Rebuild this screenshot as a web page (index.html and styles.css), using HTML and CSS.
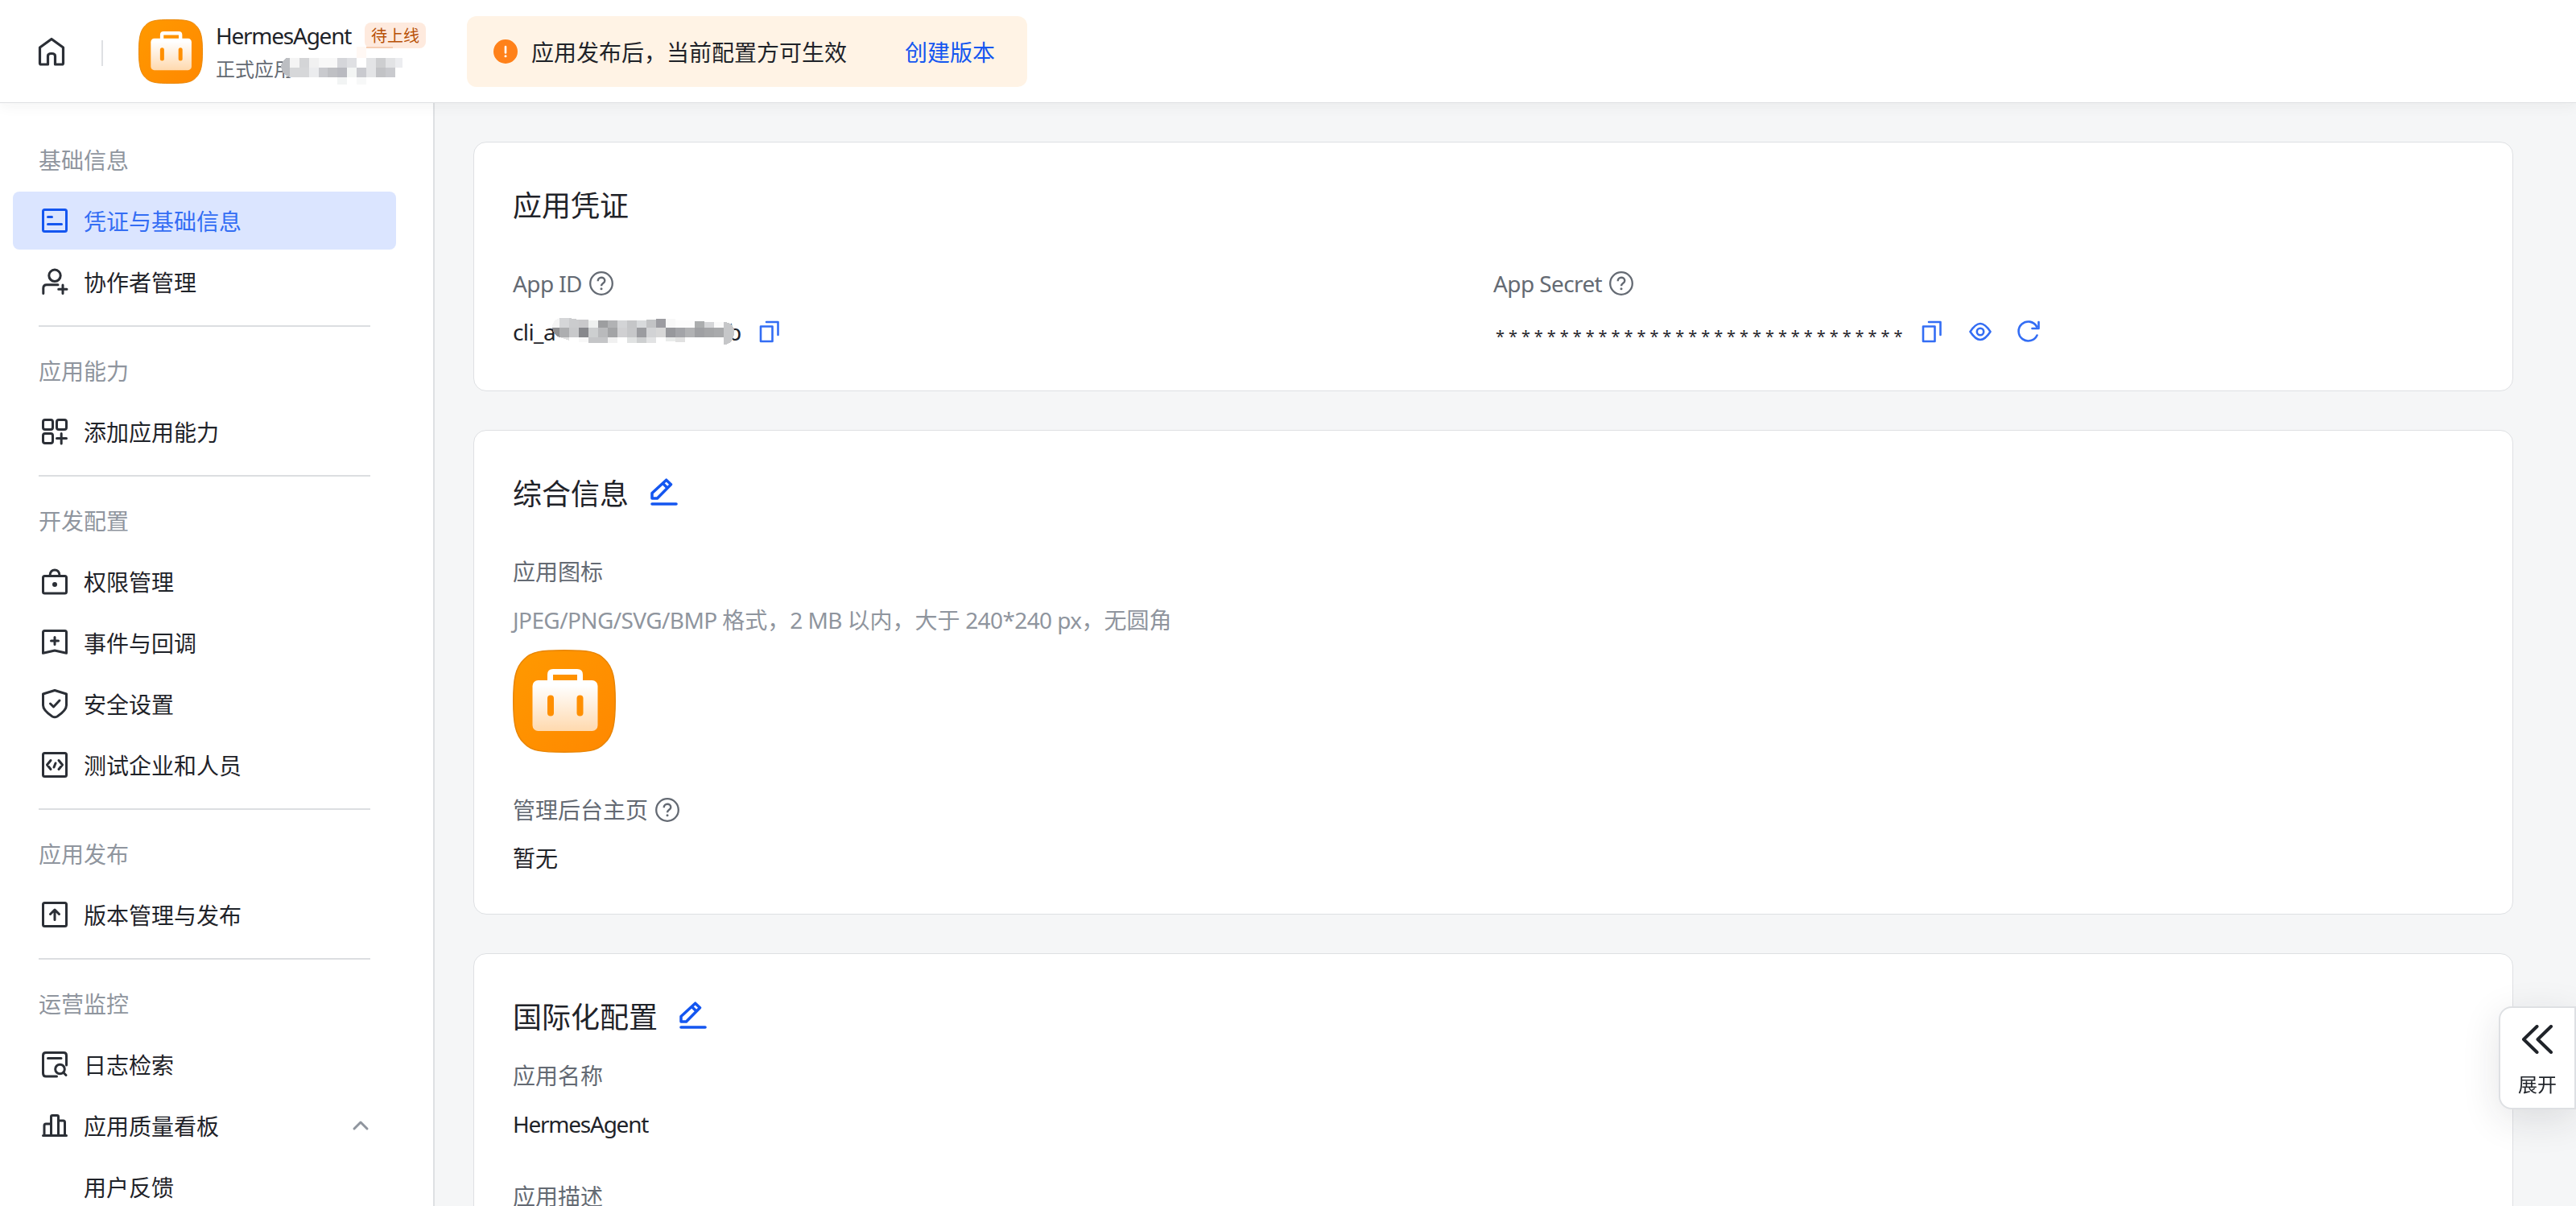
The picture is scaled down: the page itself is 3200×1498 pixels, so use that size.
FILE: index.html
```html
<!DOCTYPE html>
<html lang="zh-CN">
	<head>
		<meta charset="utf-8">
		<title>HermesAgent</title>
		<link rel="stylesheet" href="styles.css">
	</head>
	<body>
		<!-- shared icons -->
		<svg class="defs" width="0" height="0">
			<defs>
				<linearGradient id="logoBg" x1="0" y1="0" x2="1" y2="1">
					<stop offset="0" stop-color="#ff9900" />
					<stop offset="1" stop-color="#ff8800" />
				</linearGradient>
				<linearGradient id="logoCase" x1="0" y1="0" x2="0" y2="1">
					<stop offset="0.1" stop-color="#fff" />
					<stop offset="1" stop-color="#ffd9ae" />
				</linearGradient>
			</defs>
			<symbol id="logo" viewBox="0 0 128 128">
				<path d="M64 .75C92 .75 105 2 114 12C125 22 127.250 38 127.250 64S125 106 114 116C105 126 92 127.250 64 127.250S23 126 14 116C3 106 .75 90 .75 64S3 22 14 12C23 2 36 .75 64 .75Z" fill="url(#logoBg)" stroke="#e88504" stroke-width="1.500" />
				<path d="M46.500 40V31Q46.500 27.500 50 27.500H80Q83.500 27.500 83.500 31V40" fill="none" stroke="#fff" stroke-width="7" />
				<rect x="24.500" y="38" width="81" height="63" rx="7" fill="url(#logoCase)" />
				<rect x="43" y="56.500" width="8" height="26" rx="4" fill="#ff8f00" />
				<rect x="79.500" y="56.500" width="8" height="26" rx="4" fill="#ff8f00" />
			</symbol>
			<symbol id="help" viewBox="0 0 30 30">
				<circle cx="15" cy="15" r="13.800" fill="none" stroke="currentColor" stroke-width="2.300" />
				<path d="M10.700 12.200C10.700 6.300 19.300 6.300 19.300 11.700C19.300 14.800 15 14.800 15 18.300" fill="none" stroke="currentColor" stroke-width="2.400" />
				<circle cx="15" cy="21.700" r="1.500" fill="currentColor" />
			</symbol>
			<symbol id="edit" viewBox="0 0 34 34">
				<path d="M2 18.500L19.700 2.200L25.500 7.700L8.500 25H2Z M15.500 6.500L21 12" fill="none" stroke="currentColor" stroke-width="3.500" stroke-linejoin="round" />
				<path d="M2 32H32" fill="none" stroke="currentColor" stroke-width="3.600" stroke-linecap="round" />
			</symbol>
			<symbol id="copy" viewBox="0 0 28 28">
				<path d="M10 2H24.500V18M3 7.500H17.500V26H3Z" fill="none" stroke="currentColor" stroke-width="2.600" stroke-linecap="round" stroke-linejoin="round" />
			</symbol>
		</svg>

		<div class="header">
			<svg class="home" viewBox="0 0 40 40"><path d="M5.500 15L20 4.500L34.500 15V34.500Q34.500 36 33 36H24.500V25.500Q24.500 22.500 20 22.500T15.500 25.500V36H7Q5.500 36 5.500 34.500Z" /></svg>
			<div class="separator"></div>
			<svg class="header-logo"><use href="#logo" /></svg>
			<div class="app">
				<div class="app-name"><span class="name">HermesAgent</span><span class="tag">待上线</span></div>
				<div class="app-desc">
					正式应用
					<svg class="mosaic-desc" width="152" height="48" viewBox="0 0 152 48" shape-rendering="crispEdges">
						<path d="M94 1h12v14h-12z" fill="#fff8f4" /><path d="M106 1h33v2h-33z" fill="#f6cdb2" />
						<path d="M11 15H7Q0 19 0 27Q2 36 11 39Z" fill="#bcbec2" />
						<path d="M11 15h12v12h-12z" fill="#f4f4f4" /><path d="M23 15h12v12h-12z" fill="#d4d5d7" />
						<path d="M35 15h12v12h-12z" fill="#f1f1f1" /><path d="M47 15h23v12h-23z" fill="#f8f8f8" />
						<path d="M70 15h12v12h-12z" fill="#d5d6da" /><path d="M82 15h12v12h-12z" fill="#dfe0e3" />
						<path d="M94 15h12v12h-12z" fill="#fff" /><path d="M106 15h12v12h-12z" fill="#e3e4e6" />
						<path d="M118 15h12v12h-12z" fill="#cdced0" /><path d="M130 15h12v12h-12z" fill="#e2e3e5" /><path d="M142 15h9v12h-9z" fill="#ecedf0" />
						<path d="M11 27h24v12h-24z" fill="#d6d7d9" /><path d="M35 27h12v12h-12z" fill="#ebecee" />
						<path d="M47 27h11v12h-11z" fill="#c9cace" /><path d="M58 27h12v12h-12z" fill="#bfc0c4" />
						<path d="M70 27h12v12h-12z" fill="#b9bac0" /><path d="M82 27h12v12h-12z" fill="#f3f5f4" />
						<path d="M94 27h12v12h-12z" fill="#c9cacf" /><path d="M106 27h12v12h-12z" fill="#e3e4e6" />
						<path d="M118 27h12v12h-12z" fill="#c2c3c6" /><path d="M130 27h12v12h-12z" fill="#c9cace" />
						<path d="M70 39h12v9h-12z" fill="#f2f4f4" /><path d="M94 39h12v9h-12z" fill="#f7f8f8" />
					</svg>
				</div>
			</div>
			<div class="notice">
				<svg class="warn" viewBox="0 0 30 30"><circle cx="15" cy="15" r="15" fill="#ff811a" /><path d="M15 9V16.500" stroke="#fff" stroke-width="2.600" stroke-linecap="round" /><circle cx="15" cy="20.800" r="1.500" fill="#fff" /></svg>
				<span>应用发布后，当前配置方可生效</span>
				<a class="notice-link">创建版本</a>
			</div>
		</div>

		<div class="page">
			<div class="sidebar">
				<div class="group">
					<div class="group-title">基础信息</div>
					<div class="item active">
						<svg class="icon" viewBox="0 0 40 40"><rect x="5.500" y="6.500" width="29" height="27" rx="2" /><path d="M11.500 15.500H16.500M11.500 24.500H28.500" /></svg>
						<span>凭证与基础信息</span>
					</div>
					<div class="item">
						<svg class="icon" viewBox="0 0 40 40"><circle cx="20" cy="12.300" r="7.200" /><path d="M5.800 34.500V28Q5.800 23.700 10 23.700H24M30 24V34.500M24.700 29.300H35" /></svg>
						<span>协作者管理</span>
					</div>
				</div>
				<div class="group">
					<div class="group-title">应用能力</div>
					<div class="item">
						<svg class="icon" viewBox="0 0 40 40"><rect x="5.500" y="5.500" width="12" height="12" rx="2.500" /><rect x="22.500" y="5.500" width="12" height="12" rx="2.500" /><rect x="5.500" y="22.500" width="12" height="12" rx="2.500" /><path d="M28.200 22.500V35M22.500 28.500H34.500" /></svg>
						<span>添加应用能力</span>
					</div>
				</div>
				<div class="group">
					<div class="group-title">开发配置</div>
					<div class="item">
						<svg class="icon" viewBox="0 0 40 40"><rect x="5.500" y="13.500" width="29" height="21.500" rx="2" /><path d="M14 13C14 3.500 26 3.500 26 13" /><circle class="dot" cx="20" cy="24" r="3" /></svg>
						<span>权限管理</span>
					</div>
					<div class="item">
						<svg class="icon" viewBox="0 0 40 40"><path d="M7.500 5.500H32.500Q34.500 5.500 34.500 7.500V33.300L20 30L5.500 33.300V7.500Q5.500 5.500 7.500 5.500ZM20 13.500V22.500M15.500 18H24.500" /></svg>
						<span>事件与回调</span>
					</div>
					<div class="item">
						<svg class="icon" viewBox="0 0 40 40"><path d="M20 3.500L34.500 8V22C34.500 27 29 32 23 36Q20 37.500 17 36C11 32 5.500 27 5.500 22V8ZM14.500 20L18.500 24L26 16" /></svg>
						<span>安全设置</span>
					</div>
					<div class="item">
						<svg class="icon" viewBox="0 0 40 40"><rect x="5.500" y="5.500" width="29" height="29" rx="2" /><path d="M15 14.500L10.500 20L15 25.500M25 14.500L29.500 20L25 25.500M21 18L19 23" /></svg>
						<span>测试企业和人员</span>
					</div>
				</div>
				<div class="group">
					<div class="group-title">应用发布</div>
					<div class="item">
						<svg class="icon" viewBox="0 0 40 40"><rect x="5.500" y="5.500" width="29" height="29" rx="2" /><path d="M20 14V26.500M14.500 19.500L20 14L25.500 19.500" /></svg>
						<span>版本管理与发布</span>
					</div>
				</div>
				<div class="group">
					<div class="group-title">运营监控</div>
					<div class="item">
						<svg class="icon" viewBox="0 0 40 40"><path d="M34.500 21V9Q34.500 5.500 31 5.500H9Q5.500 5.500 5.500 9V31Q5.500 35 9 35H22.500M11.500 12.500H28M31 30.500L34 33.500" /><circle cx="26.500" cy="26" r="5.800" /></svg>
						<span>日志检索</span>
					</div>
					<div class="item">
						<svg class="icon" viewBox="0 0 40 40"><path d="M5.500 32.500H34.500M7 32V20Q7 18 9 18H15.500M15.500 32V9Q15.500 7.500 17 7.500H23Q24.500 7.500 24.500 9V32M24.500 14H30.500Q32.500 14 32.500 16V32" /></svg>
						<span>应用质量看板</span>
						<svg class="arrow" viewBox="0 0 24 16"><path d="M4 12L12 4L20 12" /></svg>
					</div>
					<div class="item sub"><span>用户反馈</span></div>
				</div>
			</div>

			<div class="content">
				<div class="card credentials">
					<h2>应用凭证</h2>
					<div class="columns">
						<div>
							<div class="label"><span class="latin">App ID</span><svg class="help"><use href="#help" /></svg></div>
							<div class="value">
								<span class="app-id">cli_a</span>
								<svg class="mosaic-id" width="228" height="34" viewBox="0 0 228 34" shape-rendering="crispEdges">
									<path d="M9 0Q0 3 0 12H9Z" fill="#f5f5f5" /><path d="M9 0h12v12h-12z" fill="#d5d6d8" /><path d="M21 0L33 2V12H21Z" fill="#cbccce" />
									<path d="M33 2h12v10h-12z" fill="#c9c9cb" /><path d="M45 3h12v9h-12z" fill="#eff1f0" /><path d="M57 3h12v9h-12z" fill="#9d9ea0" />
									<path d="M69 3h12v9h-12z" fill="#b1b2b4" /><path d="M81 3h12v9h-12z" fill="#d3d4d6" /><path d="M93 3h12v9h-12z" fill="#c5c6c8" />
									<path d="M105 3h12v9h-12z" fill="#d8dadc" /><path d="M117 2h12v10h-12z" fill="#c2c3c5" /><path d="M129 1h12v11h-12z" fill="#9c9ca1" />
									<path d="M141 1h12v11h-12z" fill="#f8f8f8" /><path d="M153 3h24v9h-24z" fill="#fcfcfc" /><path d="M177 4h12v8h-12z" fill="#abadae" />
									<path d="M189 5h12v7h-12z" fill="#d5d6d8" /><path d="M201 5h12v7h-12z" fill="#fbfbfb" />
									<path d="M0 12H9V24Q1 21 0 12Z" fill="#8f9092" /><path d="M9 12h12v12h-12z" fill="#adaeb0" /><path d="M21 12h12v12h-12z" fill="#c8c9cb" />
									<path d="M33 12h12v12h-12z" fill="#87888c" /><path d="M45 12h12v12h-12z" fill="#cdcfd0" /><path d="M57 12h12v12h-12z" fill="#b9babc" />
									<path d="M69 12h12v12h-12z" fill="#a3a4a6" /><path d="M81 12h12v12h-12z" fill="#d0d0d2" /><path d="M93 12h12v12h-12z" fill="#c6c7c9" />
									<path d="M105 12h12v12h-12z" fill="#9b9ca0" /><path d="M117 12h12v12h-12z" fill="#d2d3d5" /><path d="M129 12h12v12h-12z" fill="#d7d7d7" />
									<path d="M141 12h12v12h-12z" fill="#97989c" /><path d="M153 12h12v12h-12z" fill="#a3a4a8" /><path d="M165 12h12v12h-12z" fill="#b1b2b4" />
									<path d="M177 12h12v12h-12z" fill="#9fa0a3" /><path d="M189 12h12v12h-12z" fill="#a5a6a8" /><path d="M201 12h12v12h-12z" fill="#a9aaac" />
									<path d="M213 5Q226 5 226 18Q225 33 213 33Z" fill="#c6c7c9" />
									<path d="M9 24H21V28Z" fill="#e0e0e0" /><path d="M33 24h12v6h-12z" fill="#f8f8f8" /><path d="M45 24h24v7h-24z" fill="#c4c5c7" />
									<path d="M69 24h12v7h-12z" fill="#f1f1f1" /><path d="M93 24h12v7h-12z" fill="#e0e2e2" /><path d="M105 24h12v7h-12z" fill="#cdcfd0" />
									<path d="M117 24h12v7h-12z" fill="#e2e3e4" /><path d="M141 24h12v5h-12z" fill="#e9ebea" /><path d="M153 24h12v6h-12z" fill="#e1e1e1" />
								</svg>
								<span class="app-id-end">b</span>
								<svg class="action"><use href="#copy" /></svg>
							</div>
						</div>
						<div>
							<div class="label"><span class="latin">App Secret</span><svg class="help"><use href="#help" /></svg></div>
							<div class="value">
								<span class="secret">********************************</span>
								<svg class="action"><use href="#copy" /></svg>
								<svg class="action" viewBox="0 0 28 28"><path d="M1.500 14Q8 4 14 4T26.500 14Q20 24 14 24T1.500 14Z" /><circle cx="14" cy="14" r="4.200" /></svg>
								<svg class="action" viewBox="0 0 28 28"><path d="M24.500 18.500A12 12 0 1 1 24 7.500M26.500 2V10H18.500" /></svg>
							</div>
						</div>
					</div>
				</div>

				<div class="card general">
					<h2>综合信息<svg class="edit"><use href="#edit" /></svg></h2>
					<div class="label">应用图标</div>
					<div class="hint"><span class="latin">JPEG/PNG/SVG/BMP </span>格式，<span class="latin">2 MB </span>以内，大于<span class="latin"> 240*240 px</span>，无圆角</div>
					<svg class="app-logo"><use href="#logo" /></svg>
					<div class="label">管理后台主页<svg class="help"><use href="#help" /></svg></div>
					<div class="value">暂无</div>
				</div>

				<div class="card i18n">
					<h2>国际化配置<svg class="edit"><use href="#edit" /></svg></h2>
					<div class="label">应用名称</div>
					<div class="value"><span class="name">HermesAgent</span></div>
					<div class="label next">应用描述</div>
				</div>
			</div>
		</div>

		<div class="expand">
			<svg viewBox="0 0 40 36"><path d="M19.500 2L3 18L19.500 34M37 2L20.500 18L37 34" /></svg>
			<span>展开</span>
		</div>
	</body>
</html>
```
FILE: styles.css
```css
* {
	box-sizing: border-box;
}

body {
	margin: 0;
	height: 100vh;
	overflow: hidden;
	display: flex;
	flex-direction: column;
	background-color: #f5f6f7;
	color: #1f2329;
	font-family: "Noto Sans", "Noto Sans CJK SC", sans-serif;
	font-size: 28px;
}

svg {
	flex: none;
}

.defs {
	position: absolute;
}

/* top bar */
.header {
	position: relative;
	z-index: 2;
	flex: none;
	height: 128px;
	display: flex;
	align-items: center;
	padding-left: 44px;
	background-color: #fff;
	border-bottom: 1px solid #dee0e3;
	box-shadow: 0 4px 16px rgba(31, 35, 41, 0.05);
}

.home {
	width: 40px;
	height: 40px;
	fill: none;
	stroke: #2b2f36;
	stroke-width: 3.2;
	stroke-linejoin: round;
}

.separator {
	width: 2px;
	height: 32px;
	margin: 4px 44px 0 42px;
	background-color: #dee0e3;
}

.header-logo {
	width: 80px;
	height: 80px;
}

.app {
	width: 312px;
	padding-left: 16px;
}

.app-name {
	display: flex;
	align-items: center;
	height: 40px;
}

/* tighter tracking for latin text */
.name {
	letter-spacing: -1.25px;
}

.latin {
	letter-spacing: -0.6px;
	white-space: pre;
}

.tag {
	height: 32px;
	margin-left: 17px;
	padding: 0 8px;
	border-radius: 8px;
	background-color: #feeade;
	color: #b85106;
	font-size: 20px;
	line-height: 33px;
}

.app-desc {
	display: flex;
	height: 40px;
	font-size: 24px;
	line-height: 44px;
	color: #646a73;
}

.mosaic-desc {
	margin: -7px 0 0 -15px;
}

.notice {
	height: 88px;
	margin-left: 16px;
	padding: 0 40px 0 33px;
	display: flex;
	align-items: center;
	border-radius: 12px;
	background-color: #fff3e5;
}

.warn {
	width: 30px;
	height: 30px;
	margin-right: 17px;
}

.notice-link {
	margin-left: 72px;
	color: #1456f0;
}

/* side menu */
.page {
	flex: 1;
	min-height: 0;
	display: flex;
	overflow: hidden;
}

.sidebar {
	flex: none;
	width: 540px;
	padding-top: 16px;
	overflow: hidden;
	background-color: #fff;
	border-right: 2px solid #dee0e3;
}

.group {
	padding: 16px 16px 0;
}

.group:not(:last-child)::after {
	content: "";
	display: block;
	width: 412px;
	height: 2px;
	margin: 18px 32px 0;
	background-color: #dcdee1;
}

.group-title {
	height: 76px;
	padding: 1px 0 0 32px;
	line-height: 76px;
	color: #8f959e;
}

.item {
	width: 476px;
	height: 72px;
	margin: 2px 0 4px;
	padding-left: 32px;
	display: flex;
	align-items: center;
	border-radius: 8px;
}

.item:last-child {
	margin-bottom: 2px;
}

.item.active {
	background-color: #dbe5ff;
	color: #336df4;
}

.item.sub {
	padding-left: 88px;
}

.icon {
	width: 40px;
	height: 40px;
	margin-right: 16px;
	fill: none;
	stroke: #2b2f36;
	stroke-width: 3;
	stroke-linecap: round;
	stroke-linejoin: round;
}

.active .icon {
	stroke: #1456f0;
}

.dot {
	fill: #2b2f36;
	stroke: none;
}

.arrow {
	width: 24px;
	height: 16px;
	margin: 0 32px 0 auto;
	fill: none;
	stroke: #8f959e;
	stroke-width: 3;
	stroke-linecap: round;
	stroke-linejoin: round;
}

/* cards */
.content {
	flex: 1;
	padding: 48px 78px 0 48px;
}

.card {
	margin-bottom: 48px;
	padding: 48px;
	border: 1px solid #dee0e3;
	border-radius: 16px;
	background-color: #fff;
}

.credentials {
	height: 310px;
}

.general {
	height: 602px;
}

/* runs on below the fold */
.i18n {
	height: 500px;
}

h2 {
	display: flex;
	align-items: center;
	height: 56px;
	margin: 0 0 49px;
	font-size: 36px;
	font-weight: normal;
}

.edit {
	width: 34px;
	height: 34px;
	margin: 0 0 0 27px;
	color: #1456f0;
}

.columns {
	display: grid;
	grid-template-columns: 1fr 1fr;
}

.label,
.value,
.hint {
	display: flex;
	align-items: center;
	height: 44px;
	line-height: 44px;
}

.label {
	margin-bottom: 16px;
	color: #646a73;
}

.help {
	width: 30px;
	height: 30px;
	margin-left: 9px;
}

.hint {
	margin-bottom: 15px;
	color: #8f959e;
}

.app-id {
	width: 58px;
	letter-spacing: -0.6px;
}

.mosaic-id {
	position: relative;
	margin: 0 -10px 0 -9px;
}

.app-id-end {
	width: 16px;
}

.action {
	width: 28px;
	height: 28px;
	margin-left: 32px;
	fill: none;
	stroke: #336df4;
	stroke-width: 2.6;
	stroke-linecap: round;
	stroke-linejoin: round;
	color: #336df4;
}

.app-id-end + .action {
	margin-left: 22px;
}

.secret {
	width: 499px;
	margin-top: 11px;
	padding-left: 3px;
	font-size: 20px;
	letter-spacing: 4.93px;
}

.app-logo {
	display: block;
	width: 128px;
	height: 128px;
	margin-bottom: 49px;
}

.i18n h2 {
	margin-bottom: 25px;
}

.next {
	margin-top: 46px;
}

/* expand handle on the right edge */
.expand {
	position: fixed;
	right: 0;
	top: 1250px;
	z-index: 3;
	width: 96px;
	height: 128px;
	padding-top: 21px;
	display: flex;
	flex-direction: column;
	align-items: center;
	border: 2px solid #dee0e3;
	border-radius: 16px 0 0 16px;
	background-color: #fff;
	box-shadow: 0 12px 48px rgba(31, 35, 41, 0.12);
	font-size: 24px;
}

.expand svg {
	width: 40px;
	height: 36px;
	fill: none;
	stroke: #1f2329;
	stroke-width: 4;
	stroke-linecap: round;
	stroke-linejoin: round;
}

.expand span {
	margin-top: 20px;
	line-height: 36px;
}
```
